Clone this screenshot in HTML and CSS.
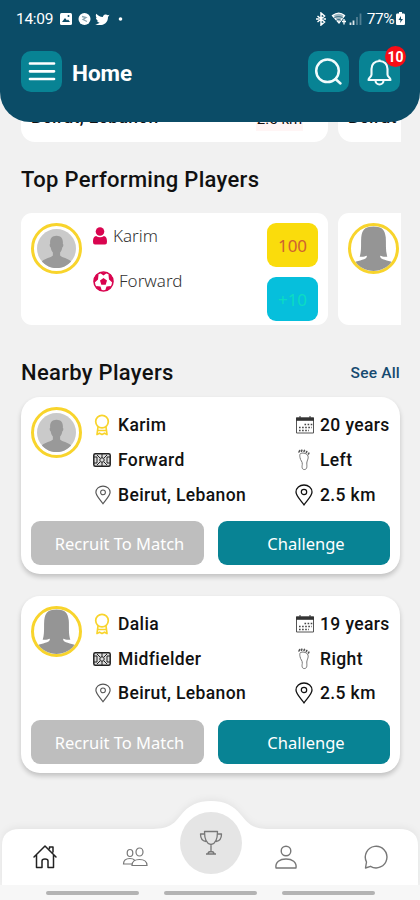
FILE: index.html
```html
<!DOCTYPE html>
<html lang="en">
<head>
<meta charset="utf-8">
<title>Home</title>
<link rel="stylesheet" href="styles.css">
</head>
<body>
<svg class="defs" aria-hidden="true">
  <symbol id="man" viewBox="0 0 40 40"><circle cx="20" cy="20" r="20" fill="#cacaca"/><path d="M20 7c-5 0-7 3.500-6.500 8-.9.500-.6 3 .6 4 .5 3 1.400 4.300 2.200 5.200v3c-2 2.400-8 2.600-11.300 6.200a20 20 0 0 0 30 0c-3.300-3.600-9.300-3.800-11.300-6.200v-3c.8-.9 1.700-2.200 2.200-5.200 1.200-1 1.500-3.500.6-4C27 10.500 25 7 20 7z" fill="#999"/></symbol>
  <symbol id="woman" viewBox="0 0 46 46"><path d="M9.500 31c2-6 1-13 1.500-19C12 5 14 1.500 23 1.500S34 5 35 12c.5 6-.5 13 1.500 19-3 .5-5-.2-7-.8-.5 4 8 4 12 6.300A23 23 0 0 1 4.500 36.500c4-2.300 12.500-2.300 12-6.300-2 .6-4 1.300-7 .8z" fill="#959595"/></symbol>
  <symbol id="award" viewBox="0 0 18 22"><g fill="none" stroke="#f8d42c" stroke-width="1.700" stroke-linejoin="round"><circle cx="9" cy="7.600" r="6.300"/><path d="M5 13l-1 7.500 2.500-1.300L9 20.500l2.500-1.300L14 20.500 13 13M4.500 16.500h9"/></g></symbol>
  <symbol id="pitch" viewBox="0 0 18 14"><rect x=".8" y=".8" width="16.400" height="12.400" rx="1.500" fill="#ddd" stroke="#222" stroke-width="1.500"/><path d="M1 4h3v6H1M17 4h-3v6h3M9 1v12M4 2l3 3M14 2l-3 3M4 12l3-3M14 12l-3-3" fill="none" stroke="#222"/><circle cx="9" cy="7" r="2.200" fill="#ddd" stroke="#222"/></symbol>
  <symbol id="pin" viewBox="0 0 18 22"><path d="M9 20.800C6 16.500 1 12 1 8a8 7 0 0 1 16 0c0 4-5 8.500-8 12.800z" fill="none" stroke="currentColor" stroke-width="1.300"/><circle cx="9" cy="8" r="2.700" fill="none" stroke="currentColor" stroke-width="1.200"/></symbol>
  <symbol id="calendar" viewBox="0 0 20 18"><path d="M1.500 2h17v15h-17z" fill="#fff" stroke="#555" stroke-width="1"/><path d="M1 1.500h18v3.300H1z" fill="#333"/><path d="M5 0v2M15 0v2" stroke="#333"/><path d="M9.500 8.500h8M4 11.500h13M4 14.500h10" stroke="#444" stroke-width="1.600" stroke-dasharray="1.600 1.500"/></symbol>
  <symbol id="foot" viewBox="0 0 14 22"><g fill="none" stroke="#777" stroke-width="1"><path d="M3.500 4.500C5 3.500 9 4 10.500 6c1.800 3-.5 5-.7 8 0 3 .7 6-2 6.500-3 .4-3-2.500-2.500-5 .4-3-2-4-2.300-7C2.700 7 2.600 5.300 3.500 4.500z"/></g><path d="M2 3l.7-1.500M4.500 2.200l.4-1M7 2.400l.5-1M9.300 3.400l.5-.9M11.400 5l.5-.8" stroke="#555" stroke-width="1.600" stroke-linecap="round"/></symbol>
</svg>

<div class="screen">
  <header class="header">
    <div class="status">
      <span class="clock">14:09</span>
      <svg class="status-left" viewBox="0 0 66 14"><rect x="1" y="1" width="12" height="12" rx="1.500" fill="#fff"/><path d="M3 10l3-4 2 2.500 1-1 2 2.500z" fill="#0b4c67"/><circle cx="9.500" cy="4" r="1" fill="#0b4c67"/><circle cx="25.500" cy="7" r="6" fill="#fff"/><path d="M23 4.500l4 1-3 2 4 2" fill="none" stroke="#88a4b0" stroke-width="1.300"/><path d="M50.500 2.800l-1.600.5A3 3 0 0 0 43.800 5C41 5 39 3.600 37.300 1.800c-1 1.800-.3 3.300.9 4.200l-1.300-.4c0 1.600 1 2.700 2.400 3.100l-1.300.1c.4 1.100 1.400 1.800 2.700 1.900-1.300 1-2.900 1.300-4.500 1.200 5 2.800 12.800.8 12.800-7z" fill="#fff"/><circle cx="61.500" cy="7" r="1.800" fill="#fff"/></svg>
      <svg class="status-right" viewBox="0 0 50 14"><path d="M2.500 4l7 6L6 13V1l3.500 3-7 6M1 7h3M8.500 7H11" fill="none" stroke="#fff" stroke-width="1.500"/><path d="M17.500 3.500c4-3 8.500-3 12 0L24 11z" fill="#9db7c2" stroke="#fff" stroke-width="1.300"/><path d="M19 6c3-2 6-2 9 0M21 8.500c2-1.300 3.500-1.300 5 0" fill="none" stroke="#0b4c67" stroke-width=".7"/><path d="M27 9.500h4M29 7v5.500" stroke="#fff" stroke-width="1.300"/><path d="M35.500 13v-2.500M38.500 13V8.500" stroke="#dce6ea" stroke-width="1.800"/><path d="M42 13V5M45.500 13V1.500" stroke="#527f93" stroke-width="1.800"/></svg>
      <span class="percent">77%</span>
      <svg class="battery" viewBox="0 0 9 13"><path d="M3 0h3v1.500h2Q9 1.500 9 3v8.500Q9 13 8 13H1Q0 13 0 11.500V3Q0 1.500 1 1.500h2z" fill="#fff"/><path d="M5 4L2.500 8h2L4 11l3-4H5z" fill="#0b4c67"/></svg>
    </div>
    <div class="bar">
      <span class="tile"><svg viewBox="0 0 41 41"><path d="M9 12.500h24M9 20.300h24M9 28h24" stroke="#fff" stroke-width="2.700" stroke-linecap="round"/></svg></span>
      <h1>Home</h1>
      <span class="tile"><svg viewBox="0 0 41 41" fill="none" stroke="#f2fbfc" stroke-width="2.500" stroke-linecap="round"><circle cx="19.500" cy="19.800" r="11.300"/><path d="M27.500 28l5 4.500"/></svg></span>
      <span class="tile"><svg viewBox="0 0 41 41" fill="none" stroke="#f2fbfc" stroke-width="2.100" stroke-linejoin="round"><path d="M20.500 8.500v2M20.500 10c-5 0-8 3.400-8 8v5.500c0 2.500-3 3-3 5.500h22c0-2.500-3-3-3-5.500V18c0-4.600-3-8-8-8z"/><path d="M16.500 29.500a4 4 0 0 0 8 0"/></svg><b class="count">10</b></span>
    </div>
  </header>

  <div class="strip previous">
    <div class="peek"><span>Beirut, Lebanon</span><em>2.5 km</em></div>
    <div class="peek next"><span>Beirut</span></div>
  </div>

  <h2 class="top-title">Top Performing Players</h2>
  <div class="strip">
    <article class="top-card">
      <span class="avatar"><svg><use href="#man"/></svg></span>
      <div class="top-info">
        <p><svg class="person" viewBox="0 0 14 18" fill="#d9044f"><circle cx="7" cy="4.500" r="4.300"/><path d="M3 9q4 2.500 8 0c2.500.5 3 2.500 3 6q0 2.500-2 2.500H2q-2 0-2-2.500c0-3.500.5-5.500 3-6z"/></svg>Karim</p>
        <p><svg class="ball" viewBox="0 0 21 21"><circle cx="10.500" cy="10.500" r="9.500" fill="#fff" stroke="#d9044f" stroke-width="1.600"/><path d="M10.500 7l3.500 2.600-1.300 4.100H8.300L7 9.600zM6.500 1.500h8l-4 3zM1 8l2-4.500 2.500.5L5 8.500 1.200 12zM20 8l-2-4.500-2.500.5.500 4.500 3.800 3.500zM3 15l4.500.5 1.500 4.500q-4-.8-6-5zM18 15l-4.500.5L12 20q4-.8 6-5z" fill="#d9044f"/></svg>Forward</p>
      </div>
      <div class="scores"><span class="score">100</span><span class="score gain">+10</span></div>
    </article>
    <article class="top-card cut"><span class="avatar"><svg class="full"><use href="#woman"/></svg></span></article>
  </div>

  <div class="heading"><h2>Nearby Players</h2><a>See All</a></div>

  <article class="card">
    <div class="details">
      <span class="avatar"><svg><use href="#man"/></svg></span>
      <ul class="main">
        <li><svg><use href="#award"/></svg>Karim</li>
        <li><svg class="field"><use href="#pitch"/></svg>Forward</li>
        <li><svg class="grey"><use href="#pin"/></svg>Beirut, Lebanon</li>
      </ul>
      <ul class="extra">
        <li><svg class="cal"><use href="#calendar"/></svg>20 years</li>
        <li><svg><use href="#foot"/></svg>Left</li>
        <li><svg><use href="#pin"/></svg>2.5 km</li>
      </ul>
    </div>
    <div class="actions"><span class="button off">Recruit To Match</span><span class="button">Challenge</span></div>
  </article>

  <article class="card">
    <div class="details">
      <span class="avatar"><svg class="full"><use href="#woman"/></svg></span>
      <ul class="main">
        <li><svg><use href="#award"/></svg>Dalia</li>
        <li><svg class="field"><use href="#pitch"/></svg>Midfielder</li>
        <li><svg class="grey"><use href="#pin"/></svg>Beirut, Lebanon</li>
      </ul>
      <ul class="extra">
        <li><svg class="cal"><use href="#calendar"/></svg>19 years</li>
        <li><svg><use href="#foot"/></svg>Right</li>
        <li><svg><use href="#pin"/></svg>2.5 km</li>
      </ul>
    </div>
    <div class="actions"><span class="button off">Recruit To Match</span><span class="button">Challenge</span></div>
  </article>

  <nav class="nav">
    <svg class="nav-shape" viewBox="0 0 420 100"><path d="M2 85V46Q2 29 20 29H150C169 29 173 25 181 15 189 5 198 1 211 1S233 5 241 15C249 25 253 29 272 29H399Q418 29 418 46V85z" fill="#fff"/></svg>
    <div class="nav-items">
      <svg viewBox="0 0 26 26" fill="none" stroke="#222" stroke-width="1.500" stroke-linejoin="round" stroke-linecap="round"><path d="M2 13L13 2l11 11M4.500 11v12.500H10V17q0-2 3-2t3 2v6.500h5.500V11M17.500 4.500V3H21v5"/></svg>
      <svg viewBox="0 0 26 26" fill="none" stroke="#777" stroke-width="1.200"><ellipse cx="8" cy="9" rx="2.800" ry="3.500"/><ellipse cx="17.500" cy="8" rx="3.500" ry="4"/><path d="M10 21.500h15c0-4-3-6-7.500-6s-7.500 2-7.500 6zM9.500 20H1.500c0-4 3-5.500 6.500-5.500q3 0 4.500 1.500"/></svg>
      <span class="trophy"><svg viewBox="0 0 26 26" fill="none" stroke="#777" stroke-width="1.300" stroke-linejoin="round"><path d="M6.500 1.500h13c0 9-2 12.500-6.500 13-4.500-.5-6.500-4-6.500-13zM6.500 4h-4c0 4.500 2 7 5.500 7.500M19.500 4h4c0 4.500-2 7-5.500 7.500M13 14.500v8M8 24h10M10 24q0-2.500 3-2.500t3 2.500"/></svg></span>
      <svg viewBox="0 0 26 26" fill="none" stroke="#777" stroke-width="1.400"><circle cx="13" cy="7" r="4.800"/><path d="M3 24c-1-6 4-9 10-9s11 3 10 9z" stroke-linejoin="round"/></svg>
      <svg viewBox="0 0 26 26" fill="none" stroke="#777" stroke-width="1.400" stroke-linejoin="round"><path d="M3.500 18a10.800 10.800 0 1 1 4 4.300L2.500 24z"/></svg>
    </div>
    <div class="lines"><i></i><i></i><i></i></div>
  </nav>
</div>
</body>
</html>
```
FILE: styles.css
```css
* { box-sizing: border-box; }
body, h1, h2, p, ul { margin: 0; padding: 0; }
ul { list-style: none; }
svg { display: block; flex: none; }
.defs { position: absolute; width: 0; height: 0; }
.screen {
  position: relative; width: 420px; height: 900px; overflow: hidden;
  background: #f1f1f1; color: #111; font-family: Roboto, sans-serif;
}
.header {
  position: relative; z-index: 2; height: 122px; padding: 9px 20px 0 16px;
  background: #0b4c67; border-radius: 0 0 30px 30px; color: #fff;
}
.status { display: flex; align-items: center; height: 19px; margin-right: -6px; }
.clock { width: 43px; font-size: 15.500px; letter-spacing: -.3px; }
.status-left { width: 66px; height: 14px; }
.status-right { width: 50px; height: 14px; margin-left: auto; }
.percent { margin-left: 2px; font-size: 15.500px; letter-spacing: -.5px; }
.battery { width: 9px; height: 13px; margin: 0 1px 0 2px; }
.bar { display: flex; align-items: center; margin: 23px 0 0 5px; }
.tile { position: relative; width: 41px; height: 41px; border-radius: 10px; background: #088394; }
.tile + .tile { margin-left: 10px; }
.tile svg { width: 41px; height: 41px; }
h1 { flex: 1; margin: 3px 0 0 10px; font-size: 22.500px; line-height: 28px; font-weight: 700; }
.count {
  position: absolute; top: -5px; right: -6px; width: 21px; height: 21px;
  border-radius: 50%; background: #f80c16; font-size: 14px; line-height: 22px; text-align: center;
}
.strip { display: flex; gap: 10px; width: 380px; margin-left: 21px; overflow: hidden; }
.previous { position: relative; margin-top: -32px; }
.peek {
  display: flex; justify-content: space-between; align-items: flex-end; flex: none;
  width: 307px; height: 52px; padding: 0 25px 11px 10px; border-radius: 14px; background: #fff;
  font-size: 17.500px; line-height: 26px; font-weight: 500; letter-spacing: .35px;
}
.peek span { margin-bottom: 1px; }
.peek em {
  width: 47px; font-style: normal; font-weight: 400; font-size: 15px; line-height: 24px;
  letter-spacing: 0; white-space: nowrap; background: #fff5f5; text-align: center;
}
h2 { font-size: 22px; line-height: 28px; font-weight: 500; letter-spacing: .3px; }
.top-title { margin: 24px 0 19px 21px; }
.top-card {
  display: flex; flex: none; width: 307px; height: 112px; padding: 10px;
  border-radius: 11px; background: #fff;
}
.avatar {
  display: flex; align-items: center; justify-content: center; flex: none;
  width: 51px; height: 51px; border: 3px solid #f8d42c; border-radius: 50%; overflow: hidden; background: #fff;
}
.avatar svg { width: 39px; height: 39px; }
.avatar svg.full { width: 47px; height: 47px; }
.top-info { flex: 1; padding: 0 0 0 11px; }
.top-info p {
  display: flex; align-items: center; height: 26px; margin-bottom: 19px;
  font: 300 17px/26px "Noto Sans", sans-serif; color: #333;
}
.person { width: 14px; height: 18px; margin-right: 6px; }
.ball { width: 21px; height: 21px; margin-right: 5px; }
.scores { display: grid; gap: 10px; height: 98px; }
.score {
  width: 51px; height: 44px; border-radius: 9px; background: #fadc0c; color: #cf6231;
  font: 400 17px/45px "Noto Sans", sans-serif; text-align: center;
}
.gain { background: #06bfdc; color: #0bdcc3; }
.heading { display: flex; justify-content: space-between; align-items: center; margin: 34px 20px 10px 21px; }
.heading a { font-size: 15.500px; font-weight: 500; color: #164a70; letter-spacing: .2px; }
.card {
  width: 379px; height: 177px; margin: 0 0 21.500px 21px; padding: 10px; border-radius: 19px;
  background: #fff; box-shadow: 0 3px 5px rgba(0, 0, 0, .2);
}
.details { display: flex; height: 114px; }
.details ul { display: grid; grid-template-rows: repeat(3, 34.700px); padding-top: 1px; }
.main { width: 202px; margin-left: 11px; }
.details li { display: grid; grid-template-columns: 20px 1fr; column-gap: 5px; align-items: center; font-size: 17.500px; font-weight: 500; letter-spacing: .38px; white-space: nowrap; }
.details li svg { width: 18px; height: 22px; }
.details li .field { height: 14px; }
.details li .cal { width: 20px; height: 18px; }
.details li .grey { width: 16px; height: 20px; margin-left: 2px; color: #555; }
.actions { display: grid; grid-template-columns: 173px 172px; gap: 14px; }
.button {
  height: 44px; padding-left: 4px; border-radius: 9px; background: #088394; color: #fff;
  font: 400 16.500px/45px "Noto Sans", sans-serif; text-align: center;
}
.off { background: #bebebe; }
.nav { position: absolute; inset: auto 0 0; height: 100px; }
.nav-shape { position: absolute; inset: 0; width: 420px; height: 100px; filter: drop-shadow(0 -2px 3px rgba(0, 0, 0, .05)); }
.nav-items {
  position: relative; display: grid; grid-template-columns: 90px 90px 61px 90px 89px;
  justify-items: center; align-items: center; height: 85px; padding: 29px 0 0;
}
.nav-items > svg, .trophy svg { width: 26px; height: 26px; }
.trophy { display: flex; justify-content: center; align-items: center; width: 62px; height: 62px; margin-top: -29px; border-radius: 50%; background: #e5e5e5; }
.lines { position: relative; display: flex; gap: 25px; height: 15px; padding: 6px 0 0 46px; background: #f7f7f7; }
.lines i { width: 93px; height: 4px; border-radius: 2px; background: #b3b3b3; }
```
